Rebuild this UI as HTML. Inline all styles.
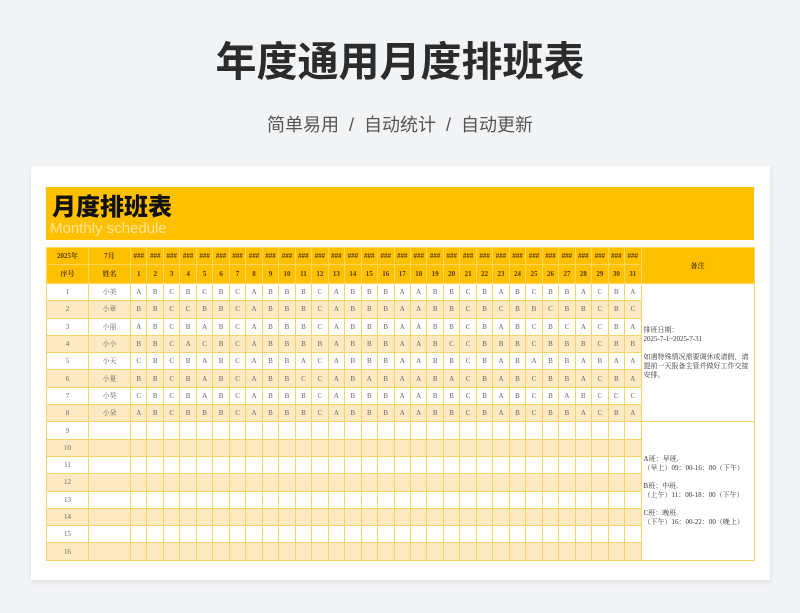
<!DOCTYPE html>
<html><head><meta charset="utf-8"><style>
*{margin:0;padding:0;box-sizing:border-box}
body{width:800px;height:613px;background:#f2f3f5;font-family:"Liberation Sans","Noto Sans CJK SC",sans-serif;position:relative;overflow:hidden}
h1{position:absolute;top:36px;left:0;width:800px;text-align:center;font-size:41px;font-weight:bold;color:#2b2b2b;letter-spacing:0px;line-height:52px}
.sub{position:absolute;top:113px;left:0;width:800px;text-align:center;font-size:18px;color:#555;line-height:24px}
.card{position:absolute;left:31px;top:166px;width:739px;height:414px;background:#fff;box-shadow:0 2px 6px rgba(0,0,0,.08)}
.ban{position:absolute;left:46px;top:187px;width:708px;height:53px;background:#ffc000}
.ban b{position:absolute;left:6px;top:2px;font-size:24px;color:#111;font-family:"Noto Sans CJK SC",sans-serif;font-weight:900;line-height:32px}
.ban i{position:absolute;left:4px;top:33px;font-style:normal;font-size:15px;color:#ffe39a;line-height:18px}
table{position:absolute;left:46px;top:247px;width:708px;border-collapse:collapse;table-layout:fixed;font-family:"Liberation Serif","Noto Serif CJK SC",serif}
td{border:1px solid #f8d36a;text-align:center;font-size:7px;color:#666;height:17.3px;padding:0;overflow:hidden;white-space:nowrap}
tr.h td{background:#ffc000;color:#5a3b00;font-weight:bold;border-color:#ffd75a;font-size:7px}
tr.h1 td{height:17px}tr.h2 td{height:19px}
tr.o td{background:#fff}
tr.e td{background:#fde9c2}
td.r{background:#fff!important;text-align:left;vertical-align:middle;font-size:7px;color:#333;white-space:normal;line-height:9px;padding-left:2px}
</style></head><body>
<h1>年度通用月度排班表</h1>
<div class="sub">简单易用 &nbsp;/&nbsp; 自动统计 &nbsp;/&nbsp; 自动更新</div>
<div class="card"></div>
<div class="ban"><b>月度排班表</b><i>Monthly schedule</i></div>
<table>
<colgroup><col style="width:42px"><col style="width:42px"><col span="31" style="width:16.48px"><col style="width:113px"></colgroup>
<tr class="h h1"><td>2025年</td><td>7月</td><td>###</td><td>###</td><td>###</td><td>###</td><td>###</td><td>###</td><td>###</td><td>###</td><td>###</td><td>###</td><td>###</td><td>###</td><td>###</td><td>###</td><td>###</td><td>###</td><td>###</td><td>###</td><td>###</td><td>###</td><td>###</td><td>###</td><td>###</td><td>###</td><td>###</td><td>###</td><td>###</td><td>###</td><td>###</td><td>###</td><td>###</td><td rowspan="2">备注</td></tr>
<tr class="h h2"><td>序号</td><td>姓名</td><td>1</td><td>2</td><td>3</td><td>4</td><td>5</td><td>6</td><td>7</td><td>8</td><td>9</td><td>10</td><td>11</td><td>12</td><td>13</td><td>14</td><td>15</td><td>16</td><td>17</td><td>18</td><td>19</td><td>20</td><td>21</td><td>22</td><td>23</td><td>24</td><td>25</td><td>26</td><td>27</td><td>28</td><td>29</td><td>30</td><td>31</td></tr>
<tr class="o"><td>1</td><td>小美</td><td>A</td><td>B</td><td>C</td><td>B</td><td>C</td><td>B</td><td>C</td><td>A</td><td>B</td><td>B</td><td>B</td><td>C</td><td>A</td><td>B</td><td>B</td><td>B</td><td>A</td><td>A</td><td>B</td><td>B</td><td>C</td><td>B</td><td>A</td><td>B</td><td>C</td><td>B</td><td>B</td><td>A</td><td>C</td><td>B</td><td>A</td><td class="r" rowspan="8">排班日期：<br>2025-7-1~2025-7-31<br><br>如遇特殊情况需要调休或请假，请提前一天报备主管并做好工作交接安排。</td></tr>
<tr class="e"><td>2</td><td>小章</td><td>B</td><td>B</td><td>C</td><td>C</td><td>B</td><td>B</td><td>C</td><td>A</td><td>B</td><td>B</td><td>B</td><td>C</td><td>A</td><td>B</td><td>B</td><td>B</td><td>A</td><td>A</td><td>B</td><td>B</td><td>C</td><td>B</td><td>C</td><td>B</td><td>B</td><td>C</td><td>B</td><td>B</td><td>C</td><td>B</td><td>C</td></tr>
<tr class="o"><td>3</td><td>小丽</td><td>A</td><td>B</td><td>C</td><td>B</td><td>A</td><td>B</td><td>C</td><td>A</td><td>B</td><td>B</td><td>B</td><td>C</td><td>A</td><td>B</td><td>B</td><td>B</td><td>A</td><td>A</td><td>B</td><td>B</td><td>C</td><td>B</td><td>A</td><td>B</td><td>C</td><td>B</td><td>C</td><td>A</td><td>C</td><td>B</td><td>A</td></tr>
<tr class="e"><td>4</td><td>小小</td><td>B</td><td>B</td><td>C</td><td>A</td><td>C</td><td>B</td><td>C</td><td>A</td><td>B</td><td>B</td><td>B</td><td>B</td><td>A</td><td>B</td><td>B</td><td>B</td><td>A</td><td>A</td><td>B</td><td>C</td><td>C</td><td>B</td><td>B</td><td>B</td><td>C</td><td>B</td><td>B</td><td>B</td><td>C</td><td>B</td><td>B</td></tr>
<tr class="o"><td>5</td><td>小天</td><td>C</td><td>B</td><td>C</td><td>B</td><td>A</td><td>B</td><td>C</td><td>A</td><td>B</td><td>B</td><td>A</td><td>C</td><td>A</td><td>B</td><td>B</td><td>B</td><td>A</td><td>A</td><td>B</td><td>B</td><td>C</td><td>B</td><td>A</td><td>B</td><td>A</td><td>B</td><td>B</td><td>A</td><td>B</td><td>A</td><td>A</td></tr>
<tr class="e"><td>6</td><td>小夏</td><td>B</td><td>B</td><td>C</td><td>B</td><td>A</td><td>B</td><td>C</td><td>A</td><td>B</td><td>B</td><td>C</td><td>C</td><td>A</td><td>B</td><td>A</td><td>B</td><td>A</td><td>A</td><td>B</td><td>A</td><td>C</td><td>B</td><td>A</td><td>B</td><td>C</td><td>B</td><td>B</td><td>A</td><td>C</td><td>B</td><td>A</td></tr>
<tr class="o"><td>7</td><td>小昊</td><td>C</td><td>B</td><td>C</td><td>B</td><td>A</td><td>B</td><td>C</td><td>A</td><td>B</td><td>B</td><td>B</td><td>C</td><td>A</td><td>B</td><td>B</td><td>B</td><td>A</td><td>A</td><td>B</td><td>B</td><td>C</td><td>B</td><td>A</td><td>B</td><td>C</td><td>B</td><td>A</td><td>B</td><td>C</td><td>C</td><td>C</td></tr>
<tr class="e"><td>8</td><td>小朵</td><td>A</td><td>B</td><td>C</td><td>B</td><td>B</td><td>B</td><td>C</td><td>A</td><td>B</td><td>B</td><td>B</td><td>C</td><td>A</td><td>B</td><td>B</td><td>B</td><td>A</td><td>A</td><td>B</td><td>B</td><td>C</td><td>B</td><td>A</td><td>B</td><td>C</td><td>B</td><td>B</td><td>A</td><td>C</td><td>B</td><td>A</td></tr>
<tr class="o"><td>9</td><td></td><td></td><td></td><td></td><td></td><td></td><td></td><td></td><td></td><td></td><td></td><td></td><td></td><td></td><td></td><td></td><td></td><td></td><td></td><td></td><td></td><td></td><td></td><td></td><td></td><td></td><td></td><td></td><td></td><td></td><td></td><td></td><td class="r" rowspan="8">A班：早班.<br>（早上）09：00-16：00（下午）<br><br>B班：中班.<br>（上午）11：00-18：00（下午）<br><br>C班：晚班.<br>（下午）16：00-22：00（晚上）</td></tr>
<tr class="e"><td>10</td><td></td><td></td><td></td><td></td><td></td><td></td><td></td><td></td><td></td><td></td><td></td><td></td><td></td><td></td><td></td><td></td><td></td><td></td><td></td><td></td><td></td><td></td><td></td><td></td><td></td><td></td><td></td><td></td><td></td><td></td><td></td><td></td></tr>
<tr class="o"><td>11</td><td></td><td></td><td></td><td></td><td></td><td></td><td></td><td></td><td></td><td></td><td></td><td></td><td></td><td></td><td></td><td></td><td></td><td></td><td></td><td></td><td></td><td></td><td></td><td></td><td></td><td></td><td></td><td></td><td></td><td></td><td></td><td></td></tr>
<tr class="e"><td>12</td><td></td><td></td><td></td><td></td><td></td><td></td><td></td><td></td><td></td><td></td><td></td><td></td><td></td><td></td><td></td><td></td><td></td><td></td><td></td><td></td><td></td><td></td><td></td><td></td><td></td><td></td><td></td><td></td><td></td><td></td><td></td><td></td></tr>
<tr class="o"><td>13</td><td></td><td></td><td></td><td></td><td></td><td></td><td></td><td></td><td></td><td></td><td></td><td></td><td></td><td></td><td></td><td></td><td></td><td></td><td></td><td></td><td></td><td></td><td></td><td></td><td></td><td></td><td></td><td></td><td></td><td></td><td></td><td></td></tr>
<tr class="e"><td>14</td><td></td><td></td><td></td><td></td><td></td><td></td><td></td><td></td><td></td><td></td><td></td><td></td><td></td><td></td><td></td><td></td><td></td><td></td><td></td><td></td><td></td><td></td><td></td><td></td><td></td><td></td><td></td><td></td><td></td><td></td><td></td><td></td></tr>
<tr class="o"><td>15</td><td></td><td></td><td></td><td></td><td></td><td></td><td></td><td></td><td></td><td></td><td></td><td></td><td></td><td></td><td></td><td></td><td></td><td></td><td></td><td></td><td></td><td></td><td></td><td></td><td></td><td></td><td></td><td></td><td></td><td></td><td></td><td></td></tr>
<tr class="e"><td>16</td><td></td><td></td><td></td><td></td><td></td><td></td><td></td><td></td><td></td><td></td><td></td><td></td><td></td><td></td><td></td><td></td><td></td><td></td><td></td><td></td><td></td><td></td><td></td><td></td><td></td><td></td><td></td><td></td><td></td><td></td><td></td><td></td></tr>
</table>
</body></html>
